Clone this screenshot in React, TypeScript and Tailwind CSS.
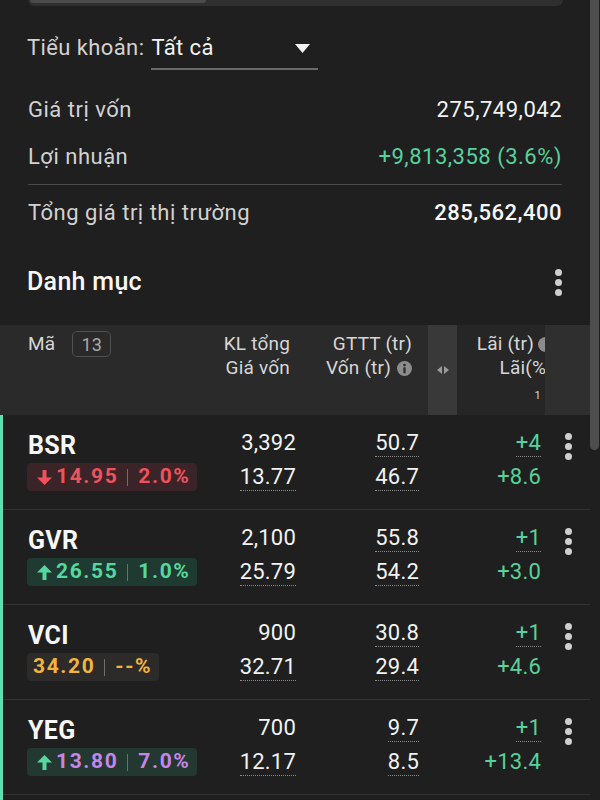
import React from "react";

type Row = {
  sym: string;
  dir: "up" | "down" | "none";
  arrowColor: string;
  textColor: string;
  badgeBg: string;
  price: string;
  pct: string;
  kl: string;
  gv: string;
  gttt: string;
  von: string;
  lai: string;
  laiPct: string;
};

const rows: Row[] = [
  { sym: "BSR", dir: "down", arrowColor: "#f0525b", textColor: "#f0525b", badgeBg: "#3a2427", price: "14.95", pct: "2.0%", kl: "3,392", gv: "13.77", gttt: "50.7", von: "46.7", lai: "+4", laiPct: "+8.6" },
  { sym: "GVR", dir: "up", arrowColor: "#56d7a0", textColor: "#56d7a0", badgeBg: "#1f3a31", price: "26.55", pct: "1.0%", kl: "2,100", gv: "25.79", gttt: "55.8", von: "54.2", lai: "+1", laiPct: "+3.0" },
  { sym: "VCI", dir: "none", arrowColor: "#f2b53c", textColor: "#f2b53c", badgeBg: "#2c2b29", price: "34.20", pct: "--%", kl: "900", gv: "32.71", gttt: "30.8", von: "29.4", lai: "+1", laiPct: "+4.6" },
  { sym: "YEG", dir: "up", arrowColor: "#56d7a0", textColor: "#c884ea", badgeBg: "#233830", price: "13.80", pct: "7.0%", kl: "700", gv: "12.17", gttt: "9.7", von: "8.5", lai: "+1", laiPct: "+13.4" },
];

function Arrow({ dir, color }: { dir: "up" | "down"; color: string }) {
  return (
    <svg width="15" height="15" viewBox="0 0 15 15" className="mr-[4px]">
      {dir === "down" ? (
        <path d="M5.5 0h4v7.5h5.5L7.5 15 0 7.5h5.5z" fill={color} />
      ) : (
        <path d="M5.5 15h4V7.5h5.5L7.5 0 0 7.5h5.5z" fill={color} />
      )}
    </svg>
  );
}

function Dots() {
  return (
    <div className="flex flex-col gap-[3px]">
      <div className="w-[7px] h-[7px] rounded-full bg-[#cfcfcf]" />
      <div className="w-[7px] h-[7px] rounded-full bg-[#cfcfcf]" />
      <div className="w-[7px] h-[7px] rounded-full bg-[#cfcfcf]" />
    </div>
  );
}

function Dotted({ children, className }: { children: React.ReactNode; className?: string }) {
  return (
    <span className={"inline-block leading-[27px] border-b border-dotted border-[#8a8a8a] " + (className ?? "")}>
      {children}
    </span>
  );
}

function InfoIcon() {
  return (
    <svg width="15" height="15" viewBox="0 0 16 16" className="ml-[6px]">
      <circle cx="8" cy="8" r="8" fill="#8c8c8c" />
      <circle cx="8" cy="4.3" r="1.4" fill="#2a2a2a" />
      <rect x="6.8" y="6.6" width="2.4" height="6.4" rx="0.6" fill="#2a2a2a" />
    </svg>
  );
}

export default function App() {
  return (
    <div
      className="relative w-[600px] h-[800px] overflow-hidden bg-[#1f1f1f] text-[#f2f2f2]"
      style={{ fontFamily: "Roboto, 'Noto Sans', sans-serif" }}
    >
      {/* scrollbar */}
      <div className="absolute top-0 right-[1px] w-[9px] h-[450px] rounded-b-[5px] bg-[#4e4e4e]" />

      <div className="w-[590px]">
        {/* tab strip */}
        <div className="ml-[28px] w-[535px] h-[6px] rounded-b-[6px] bg-[#2f2f2f]">
          <div className="ml-[2px] w-[176px] h-[3px] rounded-b-[4px] bg-[#4b4b4b]" />
        </div>

        {/* account selector */}
        <div className="mt-[28px] pl-[27px] flex items-start text-[22px] tracking-[0.4px]">
          <span className="leading-[28px] text-[#d2d2d2]">Tiểu khoản:</span>
          <div className="ml-[7px] w-[167px] h-[36px] border-b-2 border-[#6a6a6a] flex items-start justify-between pr-[8px]">
            <span className="leading-[28px] text-[#f2f2f2]">Tất cả</span>
            <svg width="15" height="9" viewBox="0 0 15 9" className="mt-[10px]">
              <path d="M0 0h15L7.5 9z" fill="#f2f2f2" />
            </svg>
          </div>
        </div>

        {/* summary */}
        <div className="px-[28px] text-[22px] tracking-[0.5px]">
          <div className="mt-[26px] flex justify-between leading-[28px]">
            <span className="text-[#d2d2d2]">Giá trị vốn</span>
            <span className="text-[#f2f2f2]">275,749,042</span>
          </div>
          <div className="mt-[19px] flex justify-between leading-[28px]">
            <span className="text-[#d2d2d2]">Lợi nhuận</span>
            <span className="text-[#56d29c]">+9,813,358 (3.6%)</span>
          </div>
          <div className="mt-[13px] h-px bg-[#4a4a4a]" />
          <div className="mt-[14px] flex justify-between leading-[28px]">
            <span className="text-[#d2d2d2]">Tổng giá trị thị trường</span>
            <span className="font-medium text-[#f7f7f7]">285,562,400</span>
          </div>
        </div>

        {/* Danh muc */}
        <div className="mt-[39px] pl-[27px] pr-[28px] flex items-center justify-between">
          <span className="text-[25px] leading-[32px] font-medium tracking-[0.3px] text-[#f7f7f7]">Danh mục</span>
          <Dots />
        </div>

        {/* table header */}
        <div className="mt-[27px] h-[90px] bg-[#2a2a2a] flex text-[19px] tracking-[0.2px] text-[#d6d6d6]">
          <div className="pl-[28px] pt-[7px] w-[200px] flex items-start">
            <span className="leading-[24px]">Mã</span>
            <span className="ml-[17px] -mt-[1px] w-[39px] h-[26px] border-[1.5px] border-[#505050] rounded-[5px] flex items-center justify-center text-[18px] text-[#a8a8a8]">
              13
            </span>
          </div>
          <div className="w-[90px] pt-[7px] flex flex-col items-end leading-[24px]">
            <span>KL tổng</span>
            <span>Giá vốn</span>
          </div>
          <div className="w-[122px] pt-[7px] flex flex-col items-end leading-[24px]">
            <span>GTTT (tr)</span>
            <span className="flex items-center">
              Vốn (tr)
              <InfoIcon />
            </span>
          </div>
          <div className="ml-[16px] w-[29px] bg-[#393939] flex items-center justify-center">
            <svg width="12" height="8" viewBox="0 0 12 8">
              <path d="M0 4l5-4v8z M12 4L7 0v8z" fill="#9a9a9a" />
            </svg>
          </div>
          <div className="w-[88px] overflow-hidden relative bg-[#262626]">
            <div className="w-[96px] pt-[7px] flex flex-col items-end leading-[24px]">
              <span className="flex items-center whitespace-nowrap">
                Lãi (tr)
                <svg width="15" height="15" viewBox="0 0 16 16" className="ml-[4px]">
                  <circle cx="8" cy="8" r="8" fill="#8c8c8c" />
                </svg>
              </span>
              <span className="whitespace-nowrap">Lãi(%)</span>
              <span className="mt-[10px] mr-[12px] text-[11px] leading-[12px]">1</span>
            </div>
          </div>
          <div className="flex-1 bg-[#2f2f2f]" />
        </div>

        {/* rows */}
        <div className="relative">
          <div className="absolute left-0 top-0 w-[3px] h-[500px] bg-[#5fe0b2]" />
          {rows.map((r) => (
            <div key={r.sym} className="h-[95px] border-b border-[#333333] flex text-[22px] tracking-[0.2px]">
              <div className="w-[200px] pl-[27px] pt-[15px] flex flex-col items-start">
                <span className="pl-[1px] text-[25px] leading-[31px] font-bold tracking-[0.3px] text-[#f7f7f7]">{r.sym}</span>
                <div
                  className={
                    "mt-[2px] h-[28px] pr-[7px] rounded-[4px] flex items-center text-[21px] font-bold tracking-[1.6px] " +
                    (r.dir === "none" ? "pl-[6px]" : "pl-[10px]")
                  }
                  style={{ backgroundColor: r.badgeBg, color: r.textColor }}
                >
                  {r.dir !== "none" && <Arrow dir={r.dir} color={r.arrowColor} />}
                  <span>{r.price}</span>
                  <span className="ml-[9px] mr-[10px] w-px h-[17px] bg-[#6e6e6e]" />
                  <span>{r.pct}</span>
                </div>
              </div>
              <div className="w-[96px] pt-[14px] flex flex-col items-end">
                <span className="leading-[28px] text-[#f2f2f2]">{r.kl}</span>
                <Dotted className="mt-[6px] text-[#f2f2f2]">{r.gv}</Dotted>
              </div>
              <div className="w-[123px] pt-[14px] flex flex-col items-end">
                <Dotted className="text-[#f2f2f2]">{r.gttt}</Dotted>
                <Dotted className="mt-[6px] text-[#f2f2f2]">{r.von}</Dotted>
              </div>
              <div className="w-[122px] pt-[14px] flex flex-col items-end">
                <Dotted className="text-[#56d29c]">{r.lai}</Dotted>
                <span className="mt-[6px] leading-[28px] text-[#56d29c]">{r.laiPct}</span>
              </div>
              <div className="flex-1 pl-[24px] pt-[18px]">
                <Dots />
              </div>
            </div>
          ))}
        </div>
      </div>
    </div>
  );
}
